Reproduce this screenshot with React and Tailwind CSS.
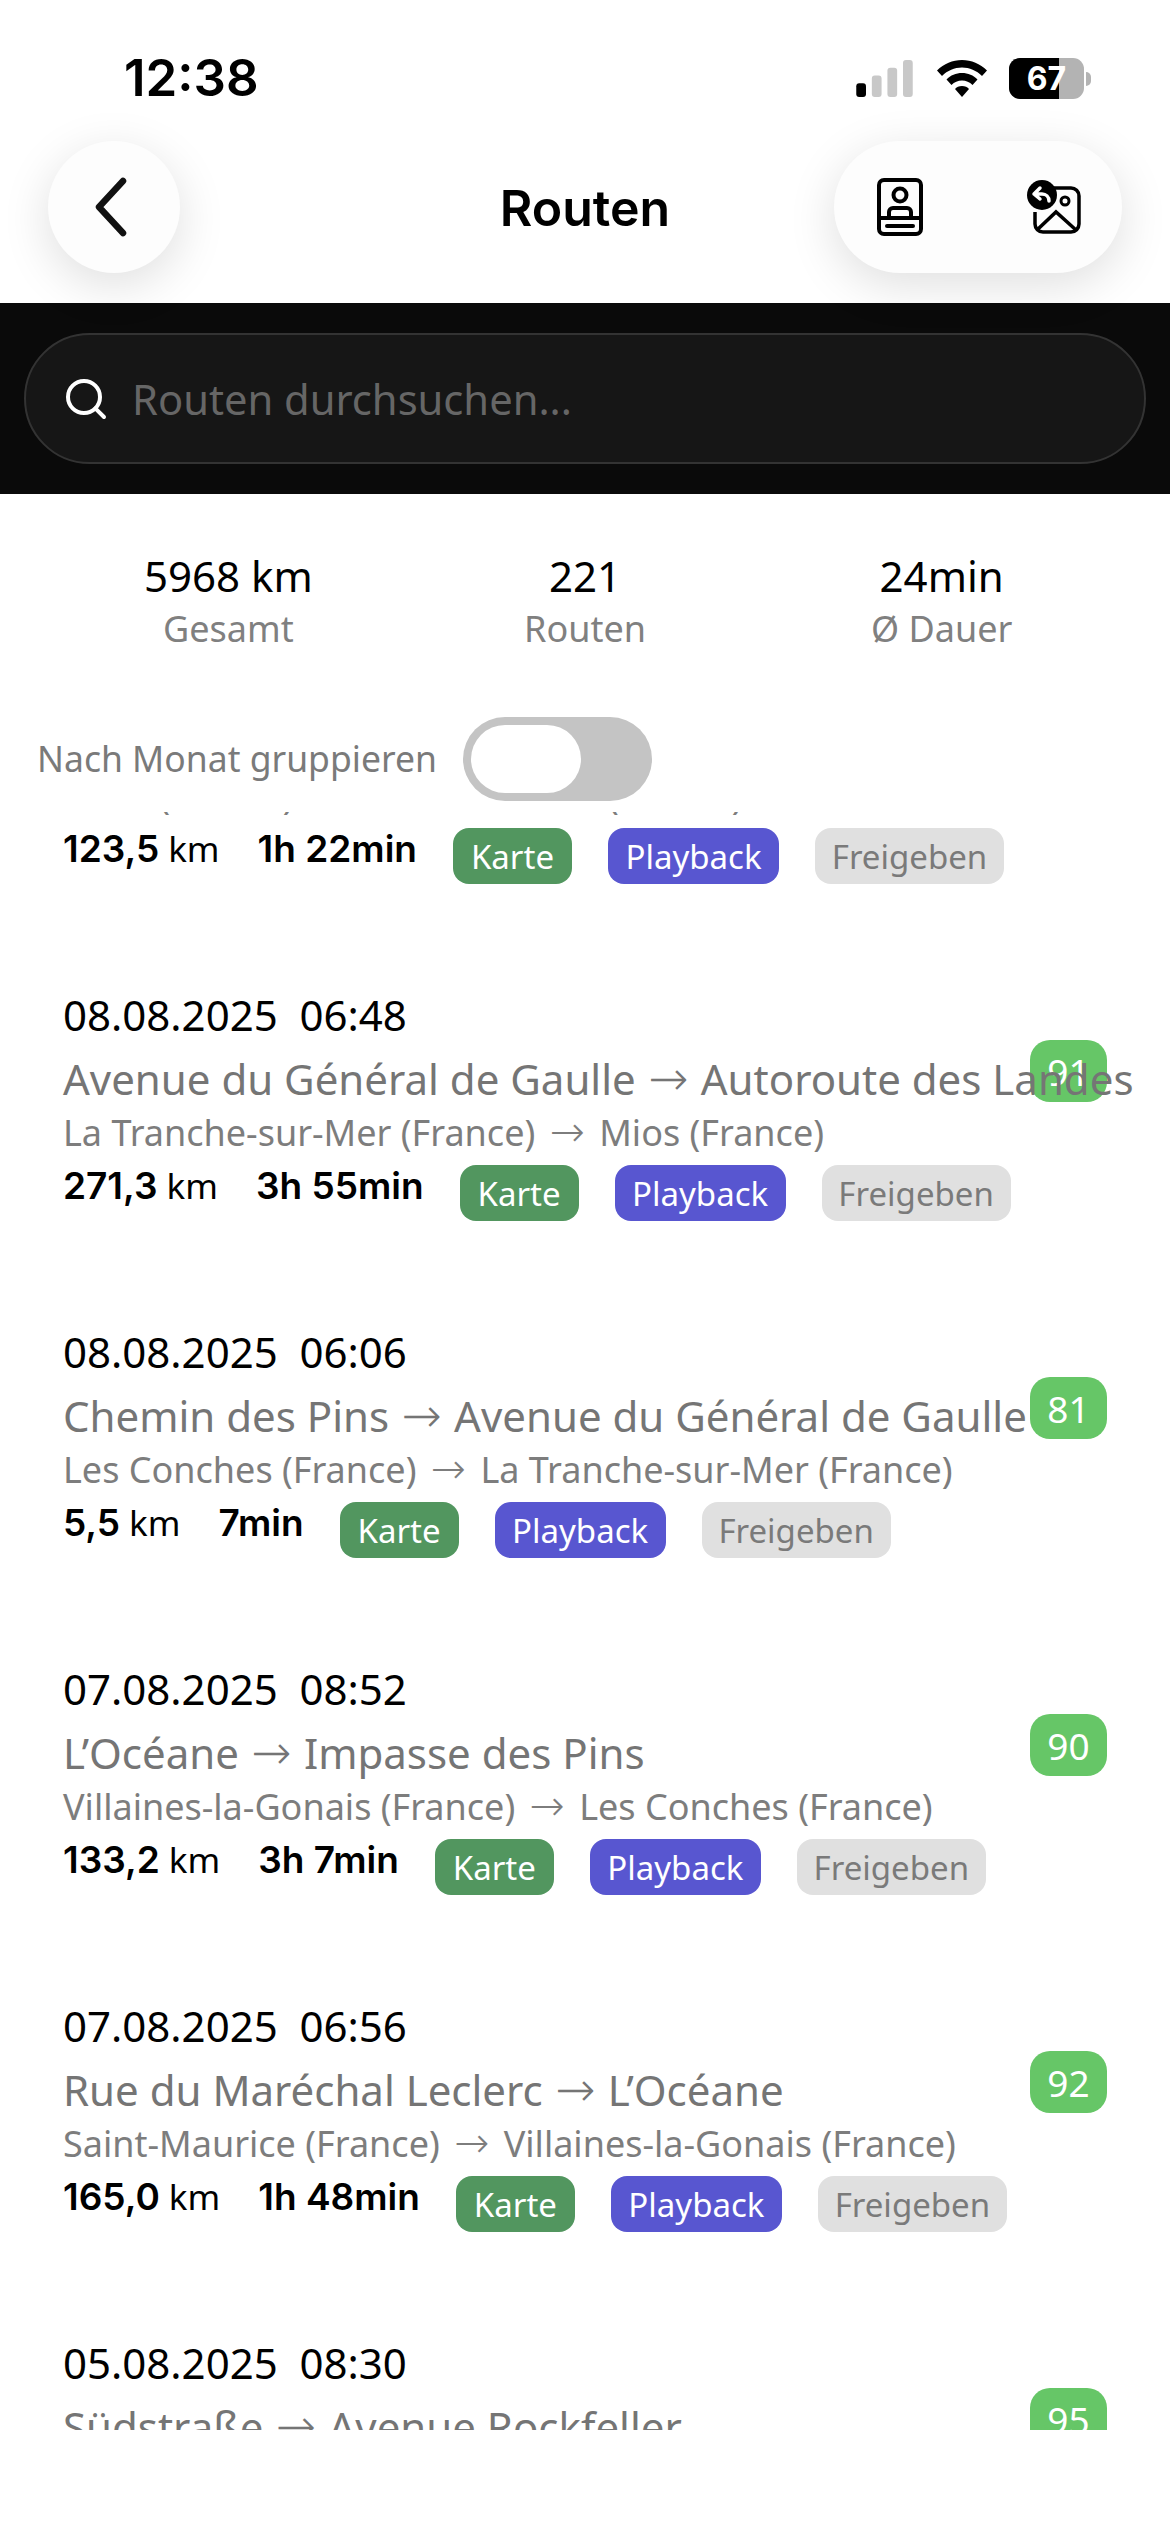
import { Search } from 'lucide-react'

const BODY = "font-['Noto_Sans',sans-serif]"

const routes = [
  { date: '08.08.2025  08:14', from: 'Rue des Ormes', to: 'Chemin des Pins', cityFrom: 'Laval (France)', cityTo: 'Saint-Herblain (France)', km: '123,5', time: '1h 22min', score: 88 },
  { date: '08.08.2025  06:48', from: 'Avenue du Général de Gaulle', to: 'Autoroute des Landes', cityFrom: 'La Tranche-sur-Mer (France)', cityTo: 'Mios (France)', km: '271,3', time: '3h 55min', score: 91 },
  { date: '08.08.2025  06:06', from: 'Chemin des Pins', to: 'Avenue du Général de Gaulle', cityFrom: 'Les Conches (France)', cityTo: 'La Tranche-sur-Mer (France)', km: '5,5', time: '7min', score: 81 },
  { date: '07.08.2025  08:52', from: 'L’Océane', to: 'Impasse des Pins', cityFrom: 'Villaines-la-Gonais (France)', cityTo: 'Les Conches (France)', km: '133,2', time: '3h 7min', score: 90 },
  { date: '07.08.2025  06:56', from: 'Rue du Maréchal Leclerc', to: 'L’Océane', cityFrom: 'Saint-Maurice (France)', cityTo: 'Villaines-la-Gonais (France)', km: '165,0', time: '1h 48min', score: 92 },
  { date: '05.08.2025  08:30', from: 'Südstraße', to: 'Avenue Rockfeller', cityFrom: 'Orléans (France)', cityTo: 'Saint-Maurice (France)', km: '112,4', time: '1h 30min', score: 95 },
]

function StatusIcons() {
  return (
    <div className="flex items-center">
      <svg width="57" height="37" viewBox="0 0 58 38">
        <rect x="0" y="24" width="10" height="14" rx="3" fill="#000" />
        <rect x="16" y="16" width="10" height="22" rx="3" fill="#c8c8c8" />
        <rect x="32" y="8" width="10" height="30" rx="3" fill="#c8c8c8" />
        <rect x="48" y="0" width="10" height="38" rx="3" fill="#c8c8c8" />
      </svg>
      <svg className="ml-[24px]" width="50" height="38" viewBox="0 0 50 38">
        <path d="M25 0C15.500 0 7 3.600 0 10.500l5 5.500C10.500 10.500 17.500 7.500 25 7.500S39.500 10.500 45 16l5-5.500C43 3.600 34.500 0 25 0z" fill="#000" />
        <path d="M25 13c-6 0-11.500 2.300-15.500 6.500l5 5.500c2.800-2.800 6.500-4.500 10.500-4.500s7.700 1.700 10.500 4.500l5-5.500C36.500 15.300 31 13 25 13z" fill="#000" />
        <path d="M25 26c-3 0-5.500 1.200-7 3l7 8 7-8c-1.500-1.800-4-3-7-3z" fill="#000" />
      </svg>
      <div className="ml-[22px] flex items-center gap-[2px]">
        <div className="relative flex h-[41px] w-[75px] items-center justify-center overflow-hidden rounded-[11px] bg-[#b3b3b3]">
          <div className="absolute inset-y-0 left-0 w-[50px] bg-black" />
          <span className="relative font-['Inter',sans-serif] text-[32px] leading-none font-bold text-white">67</span>
        </div>
        <div className="h-[14px] w-[5px] rounded-r-full bg-[#b3b3b3]" />
      </div>
    </div>
  )
}

function BackIcon() {
  return (
    <svg className="-ml-[6px]" width="36" height="60" viewBox="0 0 36 60" fill="none">
      <path d="M30 4L6 30l24 26" stroke="#111" strokeWidth="6.500" strokeLinecap="round" strokeLinejoin="round" />
    </svg>
  )
}

function ProfileCardIcon() {
  return (
    <svg width="46" height="58" viewBox="0 0 46 58" fill="none" stroke="#000" strokeWidth="4">
      <rect x="2" y="2" width="42" height="54" rx="5" />
      <circle cx="23" cy="17" r="6.500" />
      <path d="M12 40v-6a4 4 0 0 1 4-4h14a4 4 0 0 1 4 4v6" />
      <path d="M2 40h42" />
      <path d="M10 48h26" strokeLinecap="round" />
    </svg>
  )
}

function ShareImageIcon() {
  return (
    <svg width="54" height="54" viewBox="0 0 54 54" fill="none">
      <path d="M20 8h24a8 8 0 0 1 8 8v28a8 8 0 0 1-8 8H16a8 8 0 0 1-8-8V32" stroke="#000" strokeWidth="3.500" />
      <path d="M10 50l19-18 20 18" stroke="#000" strokeWidth="3.500" />
      <circle cx="38" cy="21" r="4" stroke="#000" strokeWidth="3" />
      <circle cx="15" cy="15" r="15" fill="#000" />
      <path d="M13 8l-6 6 6 5M7 14h8c4 0 7 3 7 7" stroke="#fff" strokeWidth="3.500" strokeLinecap="round" strokeLinejoin="round" />
    </svg>
  )
}

function Stat({ value, label }) {
  return (
    <div className="flex flex-col items-center">
      <div className="text-[42px] leading-[57px] text-black">{value}</div>
      <div className="text-[36px] leading-[50px] text-[#808080]">{label}</div>
    </div>
  )
}

function Actions({ km, time }) {
  return (
    <div className="flex h-[56px] items-center">
      <div className="mb-[14px] flex items-center whitespace-nowrap leading-[44px] text-black">
        <span className="font-['Inter',sans-serif] text-[37px] font-semibold">{km}</span>
        <span className="ml-[9px] text-[35px]">km</span>
        <span className="ml-[38px] font-['Inter',sans-serif] text-[37px] font-semibold">{time}</span>
      </div>
      <div className="ml-[36px] flex gap-[36px] text-[33px] leading-none">
        <span className="flex h-[56px] w-[119px] items-center justify-center rounded-[16px] bg-[#52965f] text-white">Karte</span>
        <span className="flex h-[56px] w-[171px] items-center justify-center rounded-[16px] bg-[#5856d0] text-white">Playback</span>
        <span className="flex h-[56px] w-[189px] items-center justify-center rounded-[16px] bg-[#e0e0e0] text-[#7a7a7a]">Freigeben</span>
      </div>
    </div>
  )
}

function RouteRow({ route }) {
  return (
    <div className="relative h-[337px] pl-[63px] pt-[62px]">
      <div className="absolute left-[1030px] top-[113px] flex h-[62px] w-[77px] items-center justify-center rounded-[20px] bg-[#66c667] text-[37px] leading-none text-white">{route.score}</div>
      <div className="whitespace-pre text-[42px] leading-[52px] text-black">{route.date}</div>
      <div className="relative mt-[10px] h-[56px] whitespace-nowrap text-[42px] leading-[56px] text-[#757575]">
        {route.from} <span className="mx-[1.5px] font-['DejaVu_Sans',sans-serif] text-[48px] leading-none font-extralight">→</span> {route.to}
      </div>
      <div className="mt-[1px] h-[50px] whitespace-nowrap text-[36px] leading-[50px] text-[#7d7d7d]">
        {route.cityFrom} <span className="mx-[5px] font-['DejaVu_Sans',sans-serif] text-[42px] leading-none font-extralight">→</span> {route.cityTo}
      </div>
      <div className="mt-[7px]"><Actions km={route.km} time={route.time} /></div>
    </div>
  )
}

export default function App() {
  return (
    <div className={`${BODY} h-[2532px] w-[1170px] overflow-hidden bg-white`}>
      {/* Status bar */}
      <div className="flex h-[141px] items-start justify-between pl-[124px] pr-[79px] pt-[52px]">
        <span className="font-['Inter',sans-serif] text-[51px] leading-[52px] font-semibold text-black">12:38</span>
        <div className="pt-[6px]"><StatusIcons /></div>
      </div>

      {/* Header */}
      <div className="relative flex h-[162px] items-start justify-between pl-[48px] pr-[48px]">
        <button className="flex h-[132px] w-[132px] items-center justify-center rounded-full bg-[#fdfdfd] shadow-[0_12px_48px_rgba(0,0,0,0.13)]">
          <BackIcon />
        </button>
        <h1 className="absolute inset-x-0 top-[37px] text-center font-['Inter',sans-serif] text-[50px] leading-[60px] font-semibold text-black">Routen</h1>
        <div className="flex h-[132px] w-[288px] items-center justify-between rounded-full bg-[#fdfdfd] pl-[43px] pr-[41px] shadow-[0_12px_48px_rgba(0,0,0,0.13)]">
          <ProfileCardIcon />
          <ShareImageIcon />
        </div>
      </div>

      {/* Search */}
      <div className="flex h-[191px] items-center bg-[#0a0a0a] px-[24px]">
        <div className="flex h-[131px] w-full items-center rounded-full border-2 border-[#333333] bg-[#161616] pl-[36px]">
          <Search size={48} strokeWidth={2} color="#fff" />
          <span className="ml-[22px] text-[41.7px] leading-none text-[#666666]">Routen durchsuchen...</span>
        </div>
      </div>

      {/* Totals */}
      <div className="grid grid-cols-3 px-[50px] pt-[53px]">
        <Stat value="5968 km" label="Gesamt" />
        <Stat value="221" label="Routen" />
        <Stat value="24min" label="Ø Dauer" />
      </div>

      <div className="mt-[63px] flex items-center pl-[37px]">
        <span className="text-[35.5px] leading-none text-[#7a7a7a]">Nach Monat gruppieren</span>
        <div className="ml-[26px] flex h-[84px] w-[189px] items-center rounded-full bg-[#c4c4c4] pl-[8px]">
          <div className="h-[68px] w-[110px] rounded-full bg-white" />
        </div>
      </div>

      {/* List, scrolled so the first row is cut off */}
      <div className="mt-[11px] h-[1618px] overflow-hidden">
        <div className="-mt-[222px]">
          {routes.map((route) => (
            <RouteRow key={route.date} route={route} />
          ))}
        </div>
      </div>
    </div>
  )
}
